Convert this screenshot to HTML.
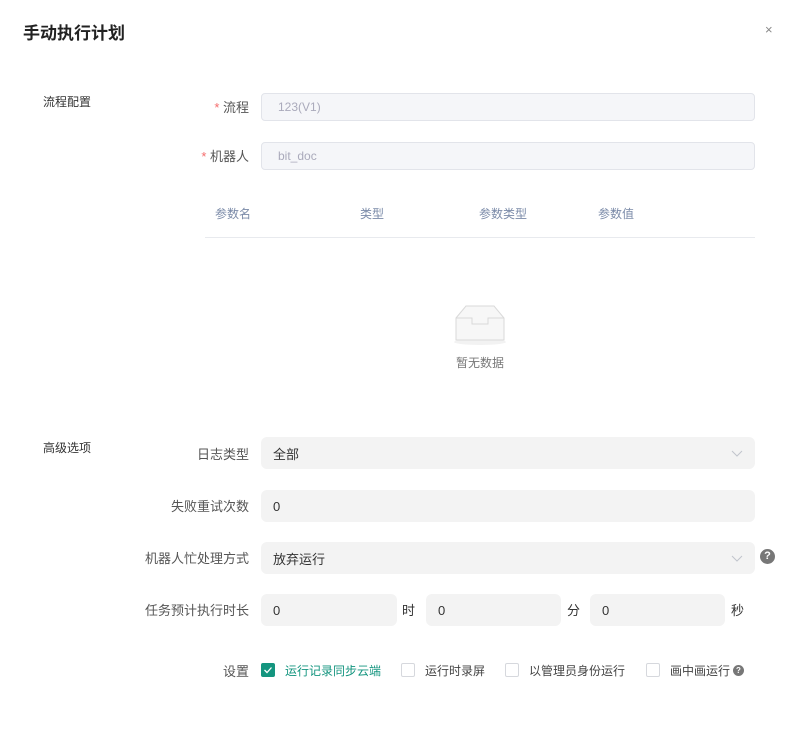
<!DOCTYPE html>
<html><head><meta charset="utf-8"><style>
*{margin:0;padding:0;box-sizing:border-box}
body{width:795px;height:747px;background:#fff;position:relative;font-family:"Liberation Sans","Noto Sans CJK SC",sans-serif;color:#333;overflow:hidden}
.a{position:absolute;white-space:nowrap}
.lbl{font-size:13px;color:#555;text-align:right;width:200px;left:49px}
.in{position:absolute;background:#f3f3f3;border-radius:6px;font-size:13px;color:#333;padding-left:12px;display:flex;align-items:center}
.dis{background:#f5f6f9;border:1px solid #e2e4ea;color:#aab;font-size:12px;padding-left:16px;border-radius:4px}
.th{font-size:12px;color:#7a8aa8;top:205px}
.cb{position:absolute;width:14px;height:14px;border:1px solid #d6d8dd;border-radius:2px;top:663px;background:#fff}
.ct{font-size:12px;color:#444;top:662px}
.chev{position:absolute;right:12px;top:50%;margin-top:-5px}
</style></head><body>
<div class="a" style="left:23px;top:19px;font-size:17px;font-weight:bold;color:#222">手动执行计划</div>
<div class="a" style="left:765px;top:22px;font-size:13px;color:#888">×</div>

<div class="a" style="left:43px;top:93px;font-size:12px;color:#333">流程配置</div>
<div class="a lbl" style="top:97px"><span style="color:#f56c6c">* </span>流程</div>
<div class="in dis" style="left:261px;top:93px;width:494px;height:28px">123(V1)</div>
<div class="a lbl" style="top:146px"><span style="color:#f56c6c">* </span>机器人</div>
<div class="in dis" style="left:261px;top:142px;width:494px;height:28px">bit_doc</div>

<div class="a th" style="left:215px">参数名</div>
<div class="a th" style="left:360px">类型</div>
<div class="a th" style="left:479px">参数类型</div>
<div class="a th" style="left:598px">参数值</div>
<div class="a" style="left:205px;top:237px;width:550px;height:1px;background:#e8eaee"></div>

<svg class="a" style="left:452px;top:302px" width="56" height="44" viewBox="0 0 56 44">
<ellipse cx="28" cy="40" rx="26" ry="3" fill="#f2f2f2"/>
<path d="M4 16 L14 4 H42 L52 16 V38 H4 Z" fill="#f7f7f7" stroke="#d9d9d9"/>
<path d="M4 16 H20 V22 H36 V16 H52" fill="none" stroke="#d9d9d9"/>
</svg>
<div class="a" style="left:456px;top:354px;font-size:12px;color:#777">暂无数据</div>

<div class="a" style="left:43px;top:439px;font-size:12px;color:#333">高级选项</div>
<div class="a lbl" style="top:444px">日志类型</div>
<div class="in" style="left:261px;top:437px;width:494px;height:32px">全部<svg class="chev" width="12" height="10"><path d="M1 3 L6 8 L11 3" fill="none" stroke="#c0c4cc"/></svg></div>
<div class="a lbl" style="top:496px">失败重试次数</div>
<div class="in" style="left:261px;top:490px;width:494px;height:32px">0</div>
<div class="a lbl" style="top:548px">机器人忙处理方式</div>
<div class="in" style="left:261px;top:542px;width:494px;height:32px">放弃运行<svg class="chev" width="12" height="10"><path d="M1 3 L6 8 L11 3" fill="none" stroke="#c0c4cc"/></svg></div>
<div class="a" style="left:760px;top:549px;width:15px;height:15px;border-radius:50%;background:#777;color:#fff;font-size:11px;font-weight:bold;text-align:center;line-height:15px">?</div>

<div class="a lbl" style="top:600px">任务预计执行时长</div>
<div class="in" style="left:261px;top:594px;width:136px;height:32px">0</div>
<div class="a" style="left:402px;top:600px;font-size:13px">时</div>
<div class="in" style="left:426px;top:594px;width:135px;height:32px">0</div>
<div class="a" style="left:567px;top:600px;font-size:13px">分</div>
<div class="in" style="left:590px;top:594px;width:135px;height:32px">0</div>
<div class="a" style="left:731px;top:600px;font-size:13px">秒</div>

<div class="a lbl" style="top:661px">设置</div>
<div class="cb" style="left:261px;background:#14957f;border-color:#14957f"><svg width="12" height="12" style="position:absolute;left:0;top:0"><path d="M2.5 6 L5 8.5 L9.5 3.5" fill="none" stroke="#fff" stroke-width="1.3"/></svg></div>
<div class="a ct" style="left:285px;color:#14957f">运行记录同步云端</div>
<div class="cb" style="left:401px"></div>
<div class="a ct" style="left:425px">运行时录屏</div>
<div class="cb" style="left:505px"></div>
<div class="a ct" style="left:529px">以管理员身份运行</div>
<div class="cb" style="left:646px"></div>
<div class="a ct" style="left:670px">画中画运行</div>
<div class="a" style="left:733px;top:665px;width:11px;height:11px;border-radius:50%;background:#777;color:#fff;font-size:8px;font-weight:bold;text-align:center;line-height:11px">?</div>
</body></html>
